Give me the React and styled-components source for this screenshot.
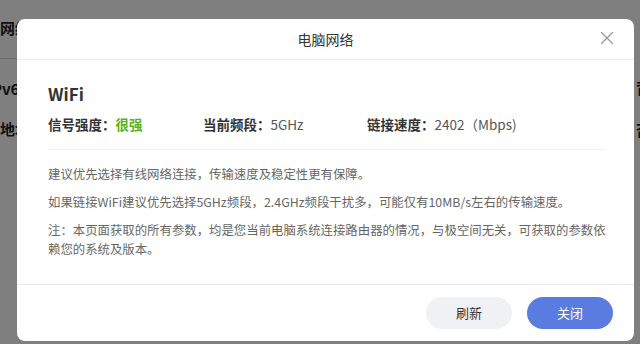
import React from 'react'
import styled, { createGlobalStyle } from 'styled-components';
import { X } from 'lucide-react';

const GlobalStyle = createGlobalStyle`
  html, body {
    margin: 0;
    padding: 0;
    width: 640px;
    height: 344px;
    overflow: hidden;
    font-family: "Noto Sans CJK SC", "Noto Sans", sans-serif;
  }
`;

const Page = styled.div`
  position: relative;
  width: 640px;
  height: 344px;
  background: #fff;
  overflow: hidden;
`;

const PageSide = styled.div`
  display: flex;
  flex-direction: column;
  align-items: flex-start;
  width: ${(p) => (p.right ? '40px' : '120px')};
  margin-left: ${(p) => (p.right ? '636px' : '0')};
  margin-top: ${(p) => (p.right ? '-344px' : '0')};
  height: 344px;
  overflow: hidden;
  font-weight: 700;
  font-size: 15px;
  color: #222;
  white-space: nowrap;
`;

const PageLabel = styled.div`
  height: 20px;
  line-height: 20px;
  margin-top: ${(p) => p.top}px;
  margin-left: ${(p) => p.shift || 0}px;
`;

const PageRule = styled.div`
  width: 640px;
  height: 1px;
  background: #ddd;
  margin-top: 20px;
  flex-shrink: 0;
`;

const Mask = styled.div`
  position: absolute;
  inset: 0;
  background: rgba(0, 0, 0, 0.5);
  display: flex;
  padding: 19px 6px 3px 17px;
`;

const Dialog = styled.div`
  width: 617px;
  height: 322px;
  background: #fff;
  border-radius: 8px;
  display: flex;
  flex-direction: column;
  overflow: hidden;
`;

const Header = styled.div`
  position: relative;
  height: 40px;
  flex-shrink: 0;
  display: flex;
  align-items: center;
  justify-content: center;
  border-bottom: 1px solid #ececec;
`;

const Title = styled.div`
  font-size: 14px;
  color: #333;
`;

const Close = styled.div`
  position: absolute;
  right: 16px;
  top: 8px;
  width: 22px;
  height: 22px;
  color: #999;
  display: flex;
`;

const Body = styled.div`
  flex: 1;
  padding: 22px 29px 0 31px;
`;

const Heading = styled.div`
  font-size: 17px;
  font-weight: 700;
  color: #333;
  line-height: 24px;
`;

const InfoRow = styled.div`
  display: flex;
  margin-top: 8px;
  padding-bottom: 15px;
  border-bottom: 1px solid #f0f0f0;
`;

const InfoItem = styled.div`
  width: ${(p) => p.w}px;
  font-size: 13.5px;
  line-height: 20px;
  color: #444;
  white-space: nowrap;
`;

const InfoKey = styled.span`
  font-weight: 700;
  color: #333;
`;

const InfoVal = styled.span`
  color: ${(p) => (p.good ? '#5cb314' : '#555')};
  font-weight: ${(p) => (p.good ? 700 : 400)};
`;

const Notes = styled.div`
  padding-top: 15px;
  margin-right: -12px;
`;

const Note = styled.p`
  margin: 0 0 9px;
  font-size: 12.4px;
  line-height: 19px;
  color: #666;
`;

const Footer = styled.div`
  height: 57px;
  flex-shrink: 0;
  border-top: 1px solid #e8e8e8;
  display: flex;
  justify-content: flex-end;
  align-items: center;
  gap: 15px;
  padding: 0 21px 1px 0;
  box-sizing: border-box;
`;

const Button = styled.button`
  width: 86px;
  height: 32px;
  border: none;
  border-radius: 16px;
  font-family: inherit;
  font-size: 13px;
  background: ${(p) => (p.primary ? '#5a7be0' : '#f0f1f5')};
  color: ${(p) => (p.primary ? '#fff' : '#333')};
  cursor: pointer;
`;

export default function App() {
  return (
    <>
      <GlobalStyle />
      <Page>
        <PageSide>
          <PageLabel top={18}>网络</PageLabel>
          <PageRule />
          <PageLabel top={20} shift={-13}>IPv6</PageLabel>
          <PageLabel top={20}>地址</PageLabel>
        </PageSide>
        <PageSide right>
          <PageLabel top={78}>背景</PageLabel>
          <PageLabel top={22}>否</PageLabel>
        </PageSide>
        <Mask>
          <Dialog>
            <Header>
              <Title>电脑网络</Title>
              <Close>
                <X size={22} strokeWidth={1.4} />
              </Close>
            </Header>
            <Body>
              <Heading>WiFi</Heading>
              <InfoRow>
                <InfoItem w={155}>
                  <InfoKey>信号强度：</InfoKey>
                  <InfoVal good>很强</InfoVal>
                </InfoItem>
                <InfoItem w={164}>
                  <InfoKey>当前频段：</InfoKey>
                  <InfoVal>5GHz</InfoVal>
                </InfoItem>
                <InfoItem w={200}>
                  <InfoKey>链接速度：</InfoKey>
                  <InfoVal>2402（Mbps)</InfoVal>
                </InfoItem>
              </InfoRow>
              <Notes>
                <Note>建议优先选择有线网络连接，传输速度及稳定性更有保障。</Note>
                <Note>如果链接WiFi建议优先选择5GHz频段，2.4GHz频段干扰多，可能仅有10MB/s左右的传输速度。</Note>
                <Note>注：本页面获取的所有参数，均是您当前电脑系统连接路由器的情况，与极空间无关，可获取的参数依赖您的系统及版本。</Note>
              </Notes>
            </Body>
            <Footer>
              <Button>刷新</Button>
              <Button primary>关闭</Button>
            </Footer>
          </Dialog>
        </Mask>
      </Page>
    </>
  );
}
